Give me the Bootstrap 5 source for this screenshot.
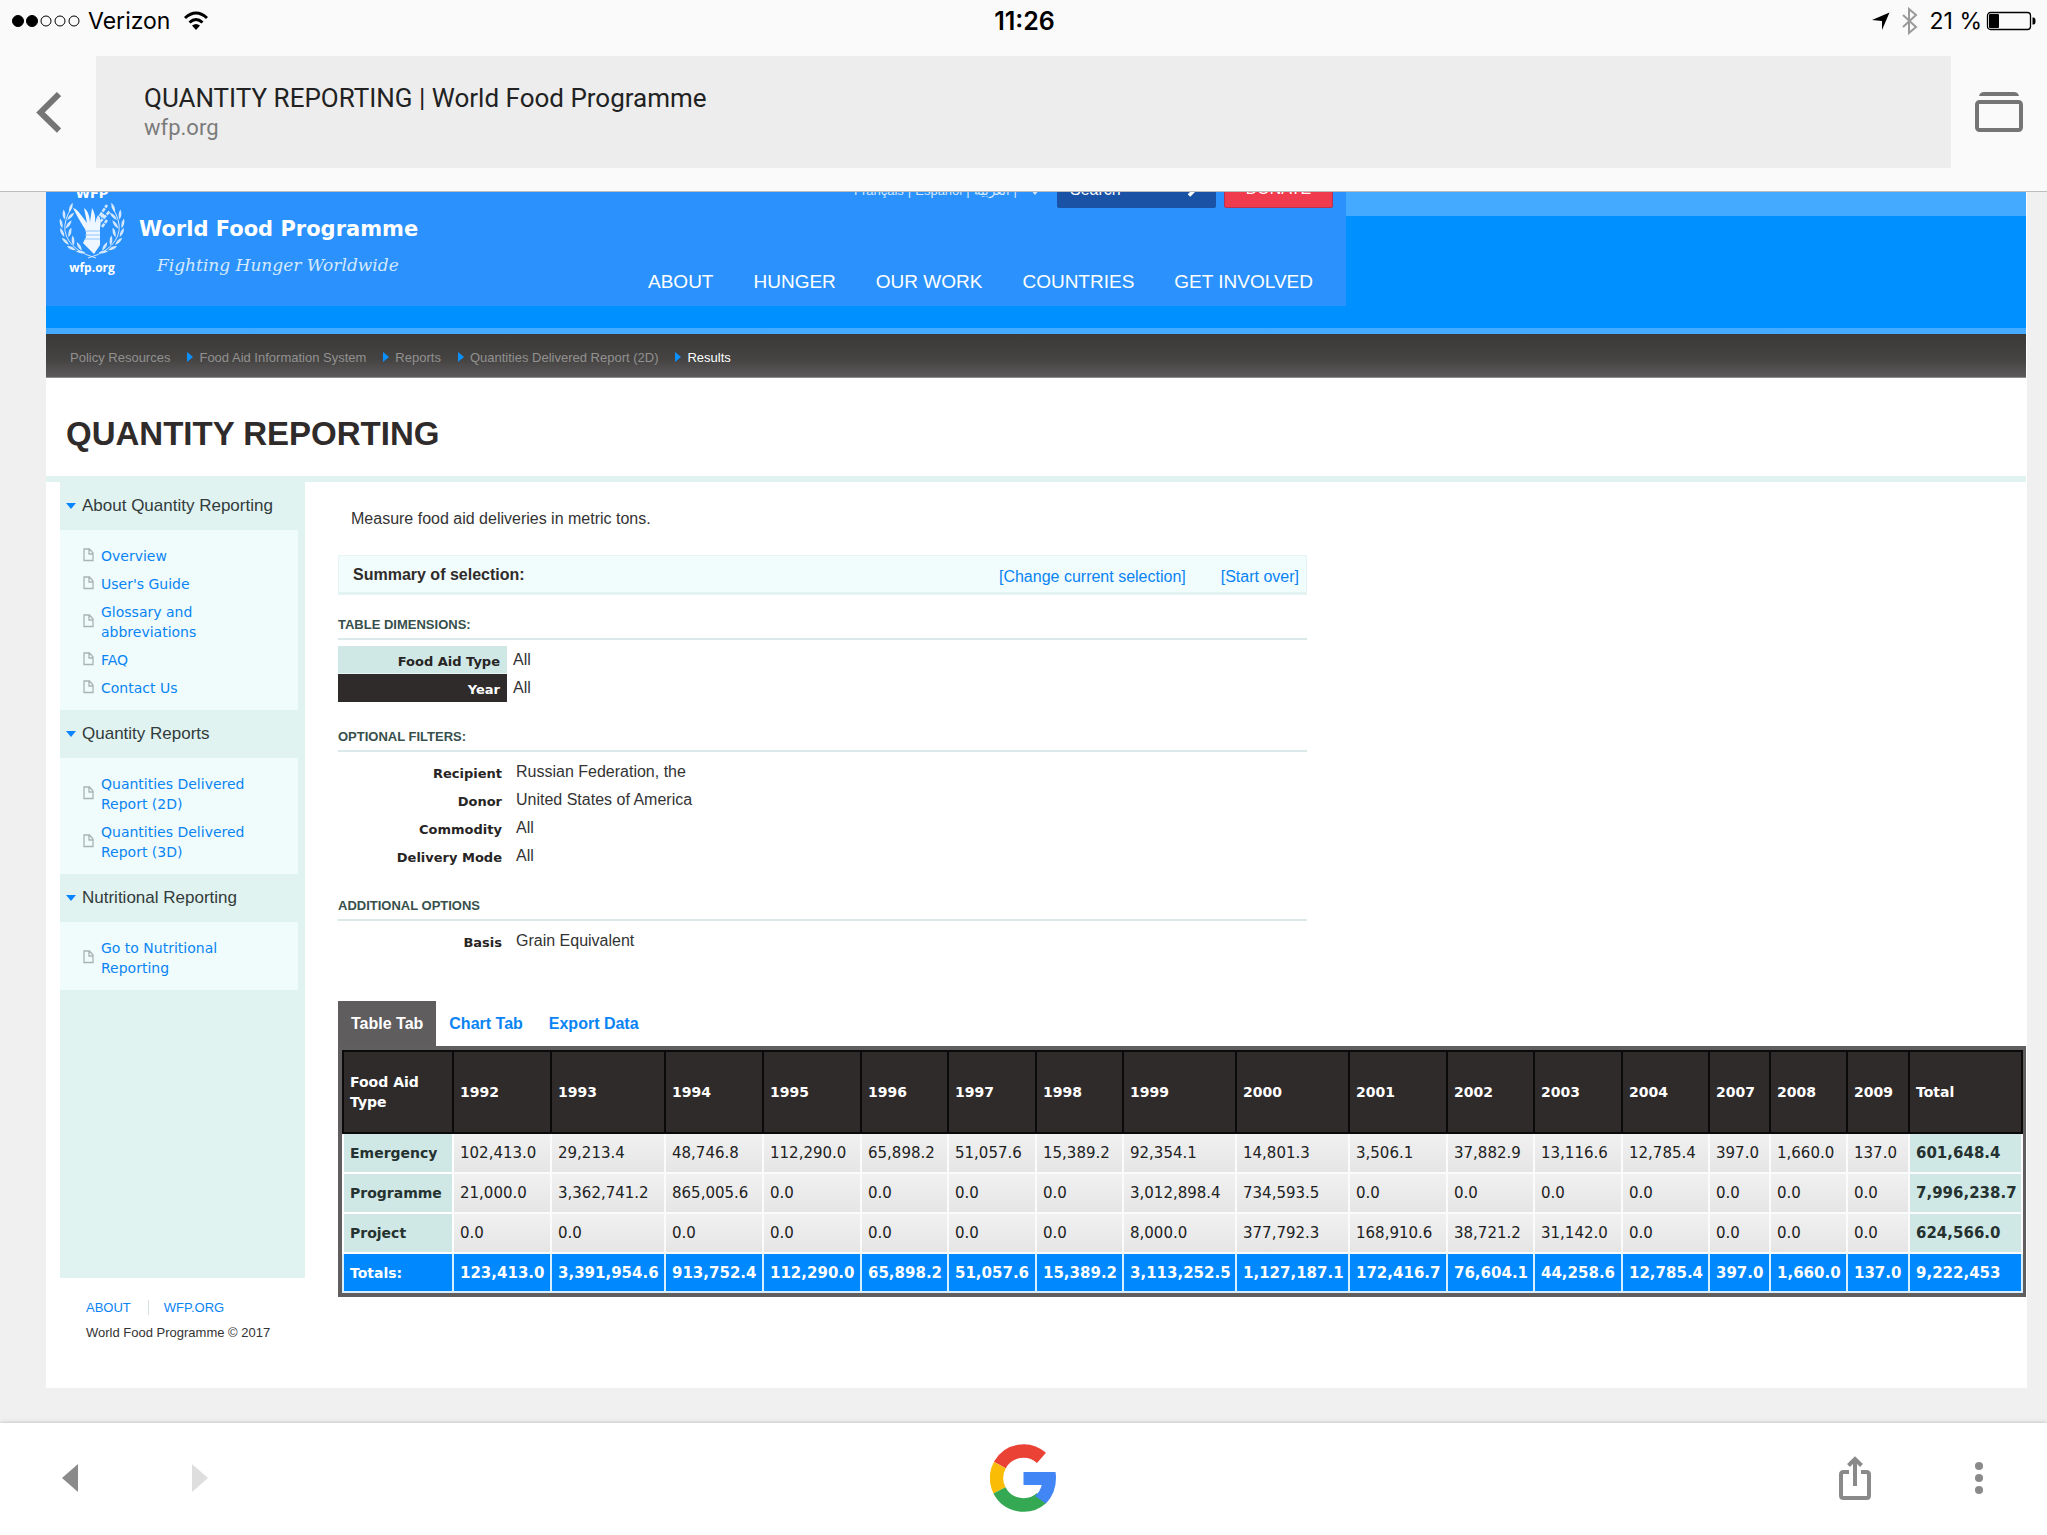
<!DOCTYPE html>
<html lang="en">
<head>
<meta charset="utf-8">
<meta name="viewport" content="width=device-width, initial-scale=1">
<title>QUANTITY REPORTING | World Food Programme</title>
<link href="https://cdn.jsdelivr.net/npm/bootstrap@5.3.0/dist/css/bootstrap.min.css" rel="stylesheet">
<style>
  body { font-family: "Liberation Sans", Arial, sans-serif; font-size: 16px; line-height: 20px; color: #333; background: #f0f0f0; height: 100vh; overflow: hidden; }
  a { color: #0a84f5; text-decoration: none; }
  button { background: none; border: 0; padding: 0; }
  svg { display: block; flex: none; }

  /* browser chrome */
  .chrome-top { background: #fafafa; border-bottom: 1px solid #bdbdbd; height: 192px; }
  .status { height: 42px; padding: 0 10px 0 12px; font: 23px/42px Inter, sans-serif; color: #000; }
  .status > div { flex: 1; }
  .clock { font-size: 25px; font-weight: 600; }
  .addr-row { padding: 14px 0 23px; }
  .side-btn { width: 96px; height: 112px; }
  .omni { background: #ededed; height: 112px; padding: 27px 48px 28px; font-family: Roboto, sans-serif; text-align: left; }
  .omni-title { font-size: 26px; line-height: 30px; color: #222; }
  .omni-url { font-size: 22px; line-height: 29px; color: #7b7b7b; }
  .chrome-bottom { background: #fff; height: 112px; padding: 0 64px 2px 62px; box-shadow: 0 0 4px rgba(0,0,0,.25); z-index: 1; }
  .chrome-bottom > div { flex: 1; }
  .nav-keys { gap: 114px; }
  .tool-keys { gap: 104px; }

  /* site page */
  .viewport-area { min-height: 0; padding: 0 20px 0 46px; }
  .site { background: #fff; height: 1196px; border-right: 1px solid #fff; }
  .site-head { background: linear-gradient(#43aaff 24px, #0090ff 24px); border-bottom: 6px solid #43aaff; padding-bottom: 22px; }
  .head-inner { background: #2b92fd; width: 1300px; height: 114px; color: #fff; }
  .brand { padding: 0 0 0 13px; gap: 14px; }
  .emblem { width: 66px; font: bold 13px/16px "DejaVu Sans", sans-serif; margin-top: -6px; }
  .emblem small { font: bold 12px/16px "Open Sans", sans-serif; }
  .brand-name { font: bold 21px/28px "DejaVu Sans", sans-serif; padding-top: 23px; }
  .brand-tag { font: italic 17px/24px "DejaVu Serif", serif; color: #d4e9ff; padding: 10px 0 0 18px; }
  .head-right { padding-right: 13px; margin-top: -16px; }
  .lang { font-size: 13px; line-height: 18px; color: #d4e9ff; padding: 6px 18px 0 0; gap: 4px; }
  .lang a { color: inherit; }
  .lang svg { margin: 8px 0 0 10px; }
  .search-box { background: #1a52a5; width: 159px; height: 32px; margin-right: 8px; padding: 0 14px 0 13px; border-radius: 2px; }
  .search-box input { background: none; border: 0; color: #fff; width: 100%; font-size: 16px; padding: 0; margin-top: -4px; }
  .search-box input::placeholder { color: #fff; opacity: 1; }
  .donate { background: #f03b4e; color: #fff; width: 109px; height: 32px; border: 1px solid #b83052; border-radius: 2px; font-size: 16px; line-height: 24px; padding-bottom: 6px; }
  .main-nav { gap: 40px; padding: 64px 20px 0 0; font-size: 19px; line-height: 20px; }
  .main-nav a { color: #fff; }
  .crumbs { background: linear-gradient(#3a3937, #454443 60%, #5c595a); border-bottom: 1px solid #8c8c8c; height: 44px; padding: 4px 24px 0; font-size: 13px; gap: 17px; color: #fff; }
  .crumbs a { color: #929190; }
  .crumbs li + li::before { content: ""; display: inline-block; border: 5px solid transparent; border-left: 6px solid #0a90ff; border-right: 0; margin-right: 6px; }
  .page-title { font-size: 33px; line-height: 40px; font-weight: bold; color: #302b2b; padding: 36px 20px 22px; border-bottom: 6px solid #e0f3f1; }

  .side-col { width: 259px; padding-left: 14px; }
  .side { background: #e0f3f1; height: 796px; padding-right: 7px; }
  .side h2 { font-size: 17px; line-height: 48px; height: 48px; color: #333b3b; padding: 0 0 0 6px; margin: 0; gap: 6px; }
  .side h2::before { content: ""; border: 5px solid transparent; border-top: 6px solid #0a84ff; border-bottom: 0; }
  .side ul { background: #effcfb; padding: 16px 12px 12px 23px; margin: 0; gap: 8px; font: 14px/20px "DejaVu Sans", sans-serif; }
  .side li { gap: 7px; }
  .side li svg { margin-bottom: 3px; }

  .content { padding-left: 33px; min-width: 0; }
  .intro { padding: 27px 13px 26px; }
  .narrow { width: 969px; }
  .summary { background: #f1fcfc; border: 1px solid #e6f5f4; border-bottom: 3px solid #e2f3f2; height: 40px; padding: 1px 7px 0 14px; margin-bottom: 20px; gap: 35px; color: #302b2b; }
  .summary a { padding-top: 4px; }
  .grp { font-size: 13px; line-height: 20px; font-weight: bold; color: #37504c; border-bottom: 2px solid #dbe8ea; padding-bottom: 3px; margin: 0; }
  .opts { margin: 0; }
  .opts div { height: 28px; }
  .opts dt { width: 169px; padding: 2px 5px 0 0; text-align: right; font: bold 13px/25px "DejaVu Sans", sans-serif; color: #272424; }
  .opts dd { margin: 0; padding-left: 9px; line-height: 25px; }
  .dims { padding: 6px 0 25px; }
  .dims dt { padding: 3px 7px 0 0; height: 28px; }
  .dims dd { padding: 1px 0 0 6px; }
  .dt-type { background: #cfe8e6; border-bottom: 1px solid #e9f4f3; }
  .opts .dt-year { background: #2f2b2b; color: #fff; }
  .filters { padding: 7px 0 25px; }
  .last-opts { padding: 7px 0 45px; }
  .report-tabs { line-height: 45px; }
  .report-tabs button { font-weight: bold; color: #0a84f5; padding: 0 13px; }
  .report-tabs button.active { background: #5f5d5e; color: #fff; }

  .report { border: 4px solid #605e5f; border-right-width: 3px; background: #fff; }
  .report table { width: 100%; table-layout: fixed; border-collapse: collapse; font: 15px/20px "DejaVu Sans", sans-serif; color: #222; }
  .report th, .report td { padding: 0 0 0 6px; height: 40px; border: 2px solid #fff; white-space: nowrap; }
  .report td { background: linear-gradient(#f1f1f1, #e5e5e5); background-clip: padding-box; border-color: #fbfbfb; }
  .report thead th { background: #2f2b2b; color: #fff; border: 2px solid #0b0a0a; height: 82px; font-size: 14px; white-space: normal; }
  .report tbody th { background: #cfe8e6; font-size: 14px; color: #263230; }
  .report tbody td:last-child { background: #cfe8e6; font-weight: bold; color: #263230; }
  .report tfoot th, .report tfoot td { background: #0088ff; color: #fff; font-weight: bold; height: 39px; border-color: #d8efff; }
  .report tfoot th { font-size: 14px; }

  .foot { padding: 20px 0 20px 26px; font-size: 13px; }
  .foot a + a { border-left: 1px solid #d5e0e0; padding-left: 15px; margin-left: 17px; }
  .foot p { margin: 5px 0 0; }
</style>
<script src="https://cdn.jsdelivr.net/npm/bootstrap@5.3.0/dist/js/bootstrap.bundle.min.js"></script>
</head>
<body class="d-flex flex-column">

<svg class="d-none">
  <symbol id="doc" viewBox="0 0 11 14"><path d="M1 1h5.500l3.500 4v7.500h-9zM6 1v5h4" fill="none" stroke="#a9b3b2" stroke-width="1.300"/></symbol>
  <symbol id="leaf" viewBox="-3 -6 6 12"><path d="M0-5.500Q3 0 0 5.500Q-3 0 0-5.500z"/></symbol>
</svg>

<header class="chrome-top flex-shrink-0">
  <div class="status d-flex align-items-center">
    <div class="d-flex align-items-center">
      <svg width="68" height="14" viewBox="0 0 68 14"><g stroke="#000"><circle cx="6" cy="7" r="5.500"/><circle cx="20" cy="7" r="5.500"/><g fill="none"><circle cx="34" cy="7" r="5"/><circle cx="48" cy="7" r="5"/><circle cx="62" cy="7" r="5"/></g></g></svg>
      <span class="ms-2 me-1">Verizon</span>
      <svg class="ms-2" width="28" height="20" viewBox="0 0 28 20"><g fill="none" stroke="#000" stroke-width="3"><path d="M3 7Q14-3 25 7"/><path d="M7.500 11.500Q14 5.500 20.500 11.500"/></g><path d="M10 14.500Q14 11.500 18 14.500L14 19z"/></svg>
    </div>
    <span class="clock">11:26</span>
    <div class="d-flex align-items-center justify-content-end">
      <svg width="18" height="18" viewBox="0 0 18 18"><path d="M17.500.5L10 18V9L0 8z"/></svg>
      <svg class="ms-2 me-2" width="24" height="28" viewBox="0 0 24 28"><path d="M5 8l13 12-7 6V2l7 6L5 20" fill="none" stroke="#9a9a9a" stroke-width="2"/></svg>
      <span>21 %</span>
      <svg class="ms-1" width="51" height="20" viewBox="0 0 51 20"><rect x="1.500" y="1.500" width="43" height="17" rx="3" fill="none" stroke="#000" stroke-width="1.300"/><rect x="3" y="3" width="10" height="14" rx="1"/><path d="M46.500 6.500h1q2 0 2 3.500t-2 3.500h-1z"/></svg>
    </div>
  </div>
  <div class="addr-row d-flex">
    <button class="side-btn d-flex align-items-center justify-content-center" aria-label="Back"><svg width="26" height="42" viewBox="0 0 26 42"><path d="M24 3L5.500 21.500L24 39.500" fill="none" stroke="#757575" stroke-width="6"/></svg></button>
    <button class="omni flex-grow-1"><span class="omni-title d-block">QUANTITY REPORTING | World Food Programme</span><span class="omni-url d-block">wfp.org</span></button>
    <button class="side-btn d-flex align-items-center justify-content-center" aria-label="Open tabs"><svg width="48" height="40" viewBox="0 0 48 40"><path d="M4 4Q5 0 9 0h30q4 0 5 4z" fill="#757575"/><rect x="2" y="10" width="44" height="28" rx="2.500" fill="none" stroke="#757575" stroke-width="4"/></svg></button>
  </div>
</header>

<main class="viewport-area flex-grow-1 overflow-hidden">
  <div class="site">
    <div class="site-head">
      <div class="head-inner d-flex justify-content-between overflow-hidden">
        <div class="brand d-flex">
          <div class="emblem text-center d-flex flex-column align-items-center">
            <span>WFP</span>
            <svg width="66" height="58" viewBox="0 0 66 58" fill="#d4e9ff">
              <g id="wreath">
                <path d="M13 5Q-4 31 19 48Q26 53 37 56" fill="none" stroke="#d4e9ff"/>
                <use href="#leaf" x="9" y="0" width="6" height="11" transform="rotate(22 12 5)"/>
                <use href="#leaf" x="2" y="7" width="6" height="11" transform="rotate(-5 5 12)"/>
                <use href="#leaf" x="9" y="9" width="6" height="11" transform="rotate(45 12 14)"/>
                <use href="#leaf" x="-1" y="16" width="6" height="11" transform="rotate(-12 2 21)"/>
                <use href="#leaf" x="7" y="17" width="6" height="11" transform="rotate(35 10 22)"/>
                <use href="#leaf" x="0" y="25" width="6" height="11" transform="rotate(-25 3 30)"/>
                <use href="#leaf" x="8" y="25" width="6" height="11" transform="rotate(15 11 30)"/>
                <use href="#leaf" x="3" y="34" width="6" height="11" transform="rotate(-45 6 39)"/>
                <use href="#leaf" x="11" y="33" width="6" height="11" transform="rotate(-5 14 38)"/>
                <use href="#leaf" x="9" y="41" width="6" height="11" transform="rotate(-65 12 46)"/>
                <use href="#leaf" x="17" y="39" width="6" height="11" transform="rotate(-30 20 44)"/>
                <use href="#leaf" x="19" y="44" width="6" height="11" transform="rotate(-80 22 50)"/>
              </g>
              <use href="#wreath" transform="matrix(-1 0 0 1 66 0)"/>
              <path fill="#eef7ff" d="M14 6Q18 7 22 13L28 21L25 6Q30 9 31 20L33 6Q37 12 36 21L39 13Q43 18 41 26V43L35 52L24 41L27 35Q28 29 24 24Q19 16 14 6z"/>
              <path d="M38 18L48 3M41 20L51 9M42 15L46 12M43 25L48 18" stroke="#d4e9ff" stroke-width="2.500" fill="none" stroke-dasharray="4 1"/>
              <path d="M27 29h14M26 33h15M26 37h15" stroke="#8fc5ff"/>
            </svg>
            <small>wfp.org</small>
          </div>
          <div>
            <div class="brand-name">World Food Programme</div>
            <div class="brand-tag">Fighting Hunger Worldwide</div>
          </div>
        </div>
        <div class="head-right">
          <div class="d-flex justify-content-end">
            <div class="lang d-flex"><a href="#">Français</a>|<a href="#">Español</a>|<a href="#" lang="ar">العربية</a>|<svg width="8" height="5" viewBox="0 0 8 5"><path d="M0 0h8L4 5z" fill="#d4e9ff"/></svg></div>
            <div class="search-box d-flex align-items-center">
              <input type="search" placeholder="Search" aria-label="Search">
              <svg class="mb-1" width="14" height="16" viewBox="0 0 14 16"><g fill="none" stroke="#fff"><circle cx="9" cy="5" r="3.500" stroke-width="2"/><path d="M6 8.500l-5 5" stroke-width="3.500"/></g></svg>
            </div>
            <button class="donate">DONATE</button>
          </div>
          <nav class="main-nav d-flex justify-content-end"><a href="#">ABOUT</a><a href="#">HUNGER</a><a href="#">OUR WORK</a><a href="#">COUNTRIES</a><a href="#">GET INVOLVED</a></nav>
        </div>
      </div>
    </div>
    <ol class="crumbs list-unstyled d-flex align-items-center mb-0">
      <li><a href="#">Policy Resources</a></li><li><a href="#">Food Aid Information System</a></li><li><a href="#">Reports</a></li><li><a href="#">Quantities Delivered Report (2D)</a></li><li>Results</li>
    </ol>
    <h1 class="page-title mb-0">QUANTITY REPORTING</h1>

    <div class="d-flex">
      <div class="side-col flex-shrink-0">
        <aside class="side">
          <h2 class="d-flex align-items-center">About Quantity Reporting</h2>
          <ul class="list-unstyled d-flex flex-column">
            <li class="d-flex align-items-center"><svg width="11" height="14"><use href="#doc"/></svg><a href="#">Overview</a></li>
            <li class="d-flex align-items-center"><svg width="11" height="14"><use href="#doc"/></svg><a href="#">User's Guide</a></li>
            <li class="d-flex align-items-center"><svg width="11" height="14"><use href="#doc"/></svg><a href="#">Glossary and<br>abbreviations</a></li>
            <li class="d-flex align-items-center"><svg width="11" height="14"><use href="#doc"/></svg><a href="#">FAQ</a></li>
            <li class="d-flex align-items-center"><svg width="11" height="14"><use href="#doc"/></svg><a href="#">Contact Us</a></li>
          </ul>
          <h2 class="d-flex align-items-center">Quantity Reports</h2>
          <ul class="list-unstyled d-flex flex-column">
            <li class="d-flex align-items-center"><svg width="11" height="14"><use href="#doc"/></svg><a href="#">Quantities Delivered Report (2D)</a></li>
            <li class="d-flex align-items-center"><svg width="11" height="14"><use href="#doc"/></svg><a href="#">Quantities Delivered Report (3D)</a></li>
          </ul>
          <h2 class="d-flex align-items-center">Nutritional Reporting</h2>
          <ul class="list-unstyled d-flex flex-column">
            <li class="d-flex align-items-center"><svg width="11" height="14"><use href="#doc"/></svg><a href="#">Go to Nutritional<br>Reporting</a></li>
          </ul>
        </aside>
        <footer class="foot"><a href="#">ABOUT</a><a href="#">WFP.ORG</a><p>World Food Programme © 2017</p></footer>
      </div>

      <section class="content flex-grow-1">
        <p class="intro mb-0">Measure food aid deliveries in metric tons.</p>
        <div class="narrow">
          <div class="summary d-flex align-items-center"><strong class="me-auto">Summary of selection:</strong><a href="#">[Change current selection]</a><a href="#">[Start over]</a></div>
          <h3 class="grp">TABLE DIMENSIONS:</h3>
          <dl class="opts dims">
            <div class="d-flex"><dt class="dt-type">Food Aid Type</dt><dd>All</dd></div>
            <div class="d-flex"><dt class="dt-year">Year</dt><dd>All</dd></div>
          </dl>
          <h3 class="grp">OPTIONAL FILTERS:</h3>
          <dl class="opts filters">
            <div class="d-flex"><dt>Recipient</dt><dd>Russian Federation, the</dd></div>
            <div class="d-flex"><dt>Donor</dt><dd>United States of America</dd></div>
            <div class="d-flex"><dt>Commodity</dt><dd>All</dd></div>
            <div class="d-flex"><dt>Delivery Mode</dt><dd>All</dd></div>
          </dl>
          <h3 class="grp">ADDITIONAL OPTIONS</h3>
          <dl class="opts last-opts">
            <div class="d-flex"><dt>Basis</dt><dd>Grain Equivalent</dd></div>
          </dl>
        </div>
        <div class="report-tabs d-flex" role="tablist">
          <button class="active" role="tab">Table Tab</button><button role="tab">Chart Tab</button><button role="tab">Export Data</button>
        </div>
        <div class="report">
          <table>
            <colgroup><col width="110"><col width="98"><col width="114"><col width="98"><col width="98"><col width="87"><col width="88"><col width="87"><col width="113"><col width="113"><col width="98"><col width="87"><col width="88"><col width="87"><col width="61"><col width="77"><col width="62"><col></colgroup>
            <thead><tr><th>Food Aid Type</th><th>1992</th><th>1993</th><th>1994</th><th>1995</th><th>1996</th><th>1997</th><th>1998</th><th>1999</th><th>2000</th><th>2001</th><th>2002</th><th>2003</th><th>2004</th><th>2007</th><th>2008</th><th>2009</th><th>Total</th></tr></thead>
            <tbody>
              <tr><th>Emergency</th><td>102,413.0</td><td>29,213.4</td><td>48,746.8</td><td>112,290.0</td><td>65,898.2</td><td>51,057.6</td><td>15,389.2</td><td>92,354.1</td><td>14,801.3</td><td>3,506.1</td><td>37,882.9</td><td>13,116.6</td><td>12,785.4</td><td>397.0</td><td>1,660.0</td><td>137.0</td><td>601,648.4</td></tr>
              <tr><th>Programme</th><td>21,000.0</td><td>3,362,741.2</td><td>865,005.6</td><td>0.0</td><td>0.0</td><td>0.0</td><td>0.0</td><td>3,012,898.4</td><td>734,593.5</td><td>0.0</td><td>0.0</td><td>0.0</td><td>0.0</td><td>0.0</td><td>0.0</td><td>0.0</td><td>7,996,238.7</td></tr>
              <tr><th>Project</th><td>0.0</td><td>0.0</td><td>0.0</td><td>0.0</td><td>0.0</td><td>0.0</td><td>0.0</td><td>8,000.0</td><td>377,792.3</td><td>168,910.6</td><td>38,721.2</td><td>31,142.0</td><td>0.0</td><td>0.0</td><td>0.0</td><td>0.0</td><td>624,566.0</td></tr>
            </tbody>
            <tfoot><tr><th>Totals:</th><td>123,413.0</td><td>3,391,954.6</td><td>913,752.4</td><td>112,290.0</td><td>65,898.2</td><td>51,057.6</td><td>15,389.2</td><td>3,113,252.5</td><td>1,127,187.1</td><td>172,416.7</td><td>76,604.1</td><td>44,258.6</td><td>12,785.4</td><td>397.0</td><td>1,660.0</td><td>137.0</td><td>9,222,453</td></tr></tfoot>
          </table>
        </div>
      </section>
    </div>
  </div>
</main>

<nav class="chrome-bottom d-flex align-items-center flex-shrink-0">
  <div class="nav-keys d-flex">
    <button aria-label="Previous page"><svg width="16" height="28" viewBox="0 0 16 28"><path d="M16 0v28L0 14z" fill="#8a8a8a"/></svg></button>
    <button aria-label="Next page"><svg width="16" height="28" viewBox="0 0 16 28"><path d="M0 0v28l16-14z" fill="#dedede"/></svg></button>
  </div>
  <button aria-label="Google"><svg width="66" height="68" viewBox="0 0 66 68"><g fill="none" stroke-width="13.500"><path d="M9.800 21.100A27 27 0 0 1 51.500 13.900" stroke="#ea4335"/><path d="M9.500 46.300A27 27 0 0 1 9.800 21.100" stroke="#fbbc05"/><path d="M51.500 54.100A27 27 0 0 1 9.500 46.300" stroke="#34a853"/></g><path d="M33.500 28h32q.5 3 .5 6q0 15-10 25.500L45 52q5-4 6.700-11H33.500z" fill="#4285f4"/></svg></button>
  <div class="tool-keys d-flex justify-content-end align-items-center">
    <button aria-label="Share"><svg width="32" height="44" viewBox="0 0 32 44"><g fill="none" stroke="#8a8a8a" stroke-width="4"><path d="M10 16H4.500Q2 16 2 18.500v21Q2 42 4.500 42h23q2.500 0 2.500-2.500v-21Q30 16 27.500 16H22M16 30V3M9.500 9.500L16 3l6.500 6.500"/></g></svg></button>
    <button aria-label="Menu"><svg width="8" height="32" viewBox="0 0 8 32"><g fill="#8a8a8a"><circle cx="4" cy="4" r="4"/><circle cx="4" cy="16" r="4"/><circle cx="4" cy="28" r="4"/></g></svg></button>
  </div>
</nav>
</body>
</html>
